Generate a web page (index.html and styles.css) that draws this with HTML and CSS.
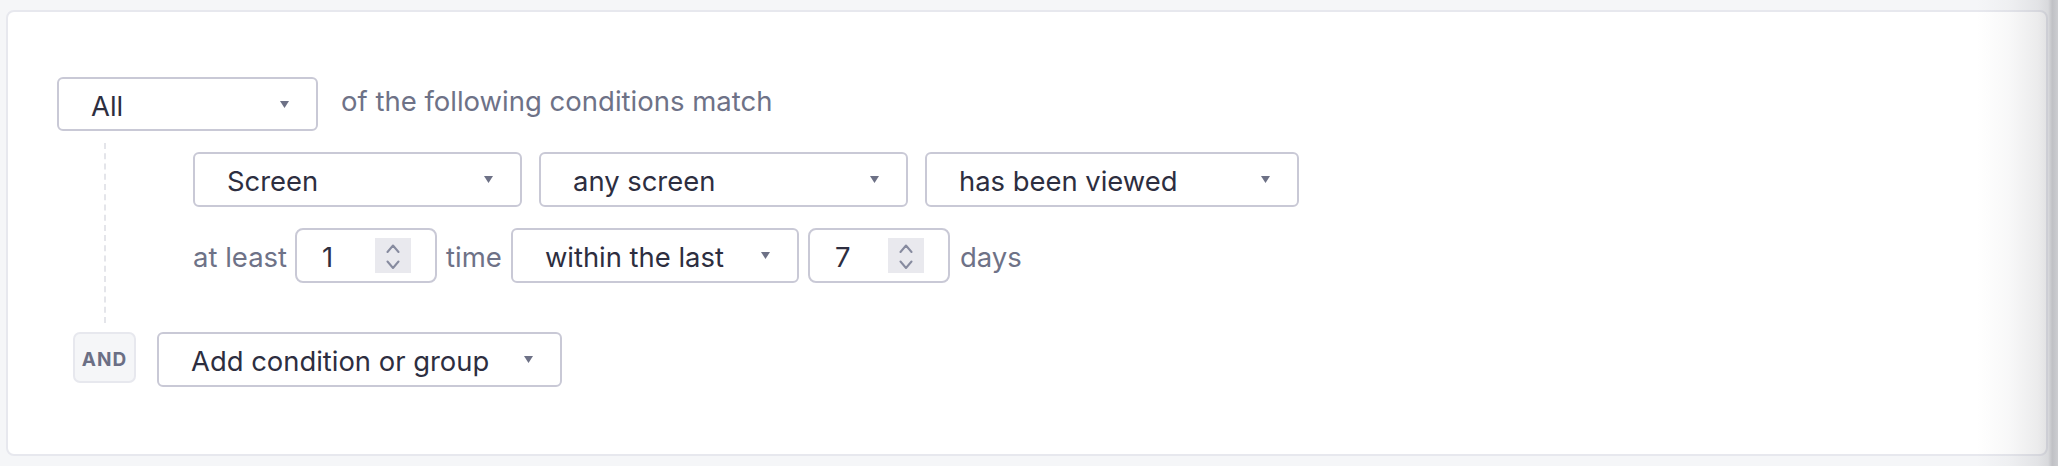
FILE: index.html
```html
<!DOCTYPE html>
<html lang="en">
<head>
<meta charset="utf-8">
<title>Segment conditions</title>
<link rel="stylesheet" href="styles.css">
</head>
<body>
<div class="card">
  <div class="group">
    <div class="group-head">
      <div class="select select-all"><span>All</span><svg class="caret" width="9" height="7" viewBox="0 0 9 7"><path d="M0 0H9L4.5 7Z"/></svg></div>
      <span class="label label-head">of the following conditions match</span>
    </div>
    <div class="group-body">
      <div class="row">
        <div class="select w-screen"><span>Screen</span><svg class="caret" width="9" height="7" viewBox="0 0 9 7"><path d="M0 0H9L4.5 7Z"/></svg></div>
        <div class="select w-any"><span>any screen</span><svg class="caret" width="9" height="7" viewBox="0 0 9 7"><path d="M0 0H9L4.5 7Z"/></svg></div>
        <div class="select w-viewed"><span>has been viewed</span><svg class="caret" width="9" height="7" viewBox="0 0 9 7"><path d="M0 0H9L4.5 7Z"/></svg></div>
      </div>
      <div class="row row-freq">
        <span class="label l-atleast">at least</span>
        <div class="num"><span>1</span><svg class="stepper" width="36" height="35" viewBox="0 0 36 35"><path d="M12.5 14L18 7.5L23.5 14M12.5 23.5L18 30L23.5 23.5"/></svg></div>
        <span class="label l-time">time</span>
        <div class="select w-within"><span>within the last</span><svg class="caret" width="9" height="7" viewBox="0 0 9 7"><path d="M0 0H9L4.5 7Z"/></svg></div>
        <div class="num"><span>7</span><svg class="stepper" width="36" height="35" viewBox="0 0 36 35"><path d="M12.5 14L18 7.5L23.5 14M12.5 23.5L18 30L23.5 23.5"/></svg></div>
        <span class="label l-days">days</span>
      </div>
    </div>
    <div class="group-foot">
      <div class="and">AND</div>
      <div class="select w-add"><span>Add condition or group</span><svg class="caret" width="9" height="7" viewBox="0 0 9 7"><path d="M0 0H9L4.5 7Z"/></svg></div>
    </div>
  </div>
</div>
<div class="drawer-shadow"></div>
</body>
</html>
```
FILE: styles.css
```css
html, body {
  margin: 0;
  padding: 0;
}
body {
  background: #f5f6f8;
  font-family: Inter, "Noto Sans", "Liberation Sans", sans-serif;
  width: 2058px;
  height: 466px;
  overflow: hidden;
  position: relative;
}
.card {
  margin: 10px 10px 0 6px;
  height: 446px;
  box-sizing: border-box;
  background: #ffffff;
  border: 2px solid #e7e8ee;
  border-radius: 8px;
  padding: 65px 0 0 49px;
}
.group-head {
  display: flex;
  align-items: center;
}
.select {
  box-sizing: border-box;
  height: 55px;
  border: 2px solid #c9c9d6;
  border-radius: 6px;
  background: #fff;
  display: flex;
  align-items: center;
  justify-content: space-between;
  padding: 0 27px 0 32px;
  font-size: 27.4px;
  color: #2d2e40;
  white-space: nowrap;
}
.select span,
.num span {
  padding-top: 3px;
}
.caret {
  fill: #6d7186;
  flex: none;
}
.select-all {
  width: 261px;
  height: 54px;
}
.label {
  font-size: 27.5px;
  color: #6e7287;
  white-space: nowrap;
}
.label-head {
  margin-left: 23px;
  position: relative;
  top: -3px;
}
.group-body {
  margin: 12px 0 0 47px;
  border-left: 2px dashed #e4e5ea;
  padding: 9px 0 40px 87px;
  display: flex;
  flex-direction: column;
  gap: 21px;
}
.row {
  display: flex;
  align-items: center;
  gap: 17px;
}
.w-screen { width: 329px; }
.w-any { width: 369px; }
.w-viewed { width: 374px; }
.w-within { width: 288px; }
.w-add { width: 405px; }
.row-freq {
  gap: 0;
}
.row-freq .label {
  padding-top: 2px;
}
.l-atleast { margin-right: 8px; }
.l-time { margin: 0 9px 0 9px; }
.w-within { margin-right: 9px; }
.l-days { margin-left: 10px; }
.num {
  box-sizing: border-box;
  width: 142px;
  height: 55px;
  border: 2px solid #c9c9d6;
  border-radius: 8px;
  display: flex;
  align-items: center;
  padding: 0 24px 0 25px;
  font-size: 27.4px;
  color: #2d2e40;
}
.num span {
  flex: 1;
}
.stepper {
  background: #e9e9ee;
  flex: none;
}
.stepper path {
  fill: none;
  stroke: #878b9f;
  stroke-width: 2;
  stroke-linecap: round;
  stroke-linejoin: round;
}
.group-foot {
  margin-top: 9px;
  padding-left: 16px;
  display: flex;
  align-items: flex-start;
  gap: 21px;
}
.and {
  box-sizing: border-box;
  width: 63px;
  height: 51px;
  background: #f5f6f8;
  border: 2px solid #e7e8ee;
  border-radius: 7px;
  display: flex;
  align-items: center;
  justify-content: center;
  padding-top: 3px;
  font-size: 19px;
  font-weight: 700;
  letter-spacing: 1px;
  color: #6b6f85;
}
.drawer-shadow {
  position: absolute;
  top: 0;
  right: 0;
  width: 82px;
  height: 100%;
  background: linear-gradient(to right, rgba(40, 40, 50, 0) 0%, rgba(40, 40, 50, 0.03) 40%, rgba(40, 40, 50, 0.09) 75%, rgba(40, 40, 50, 0.14) 88%, rgba(40, 40, 50, 0.26) 93%, rgba(40, 40, 50, 0.2) 100%);
  pointer-events: none;
}
```
